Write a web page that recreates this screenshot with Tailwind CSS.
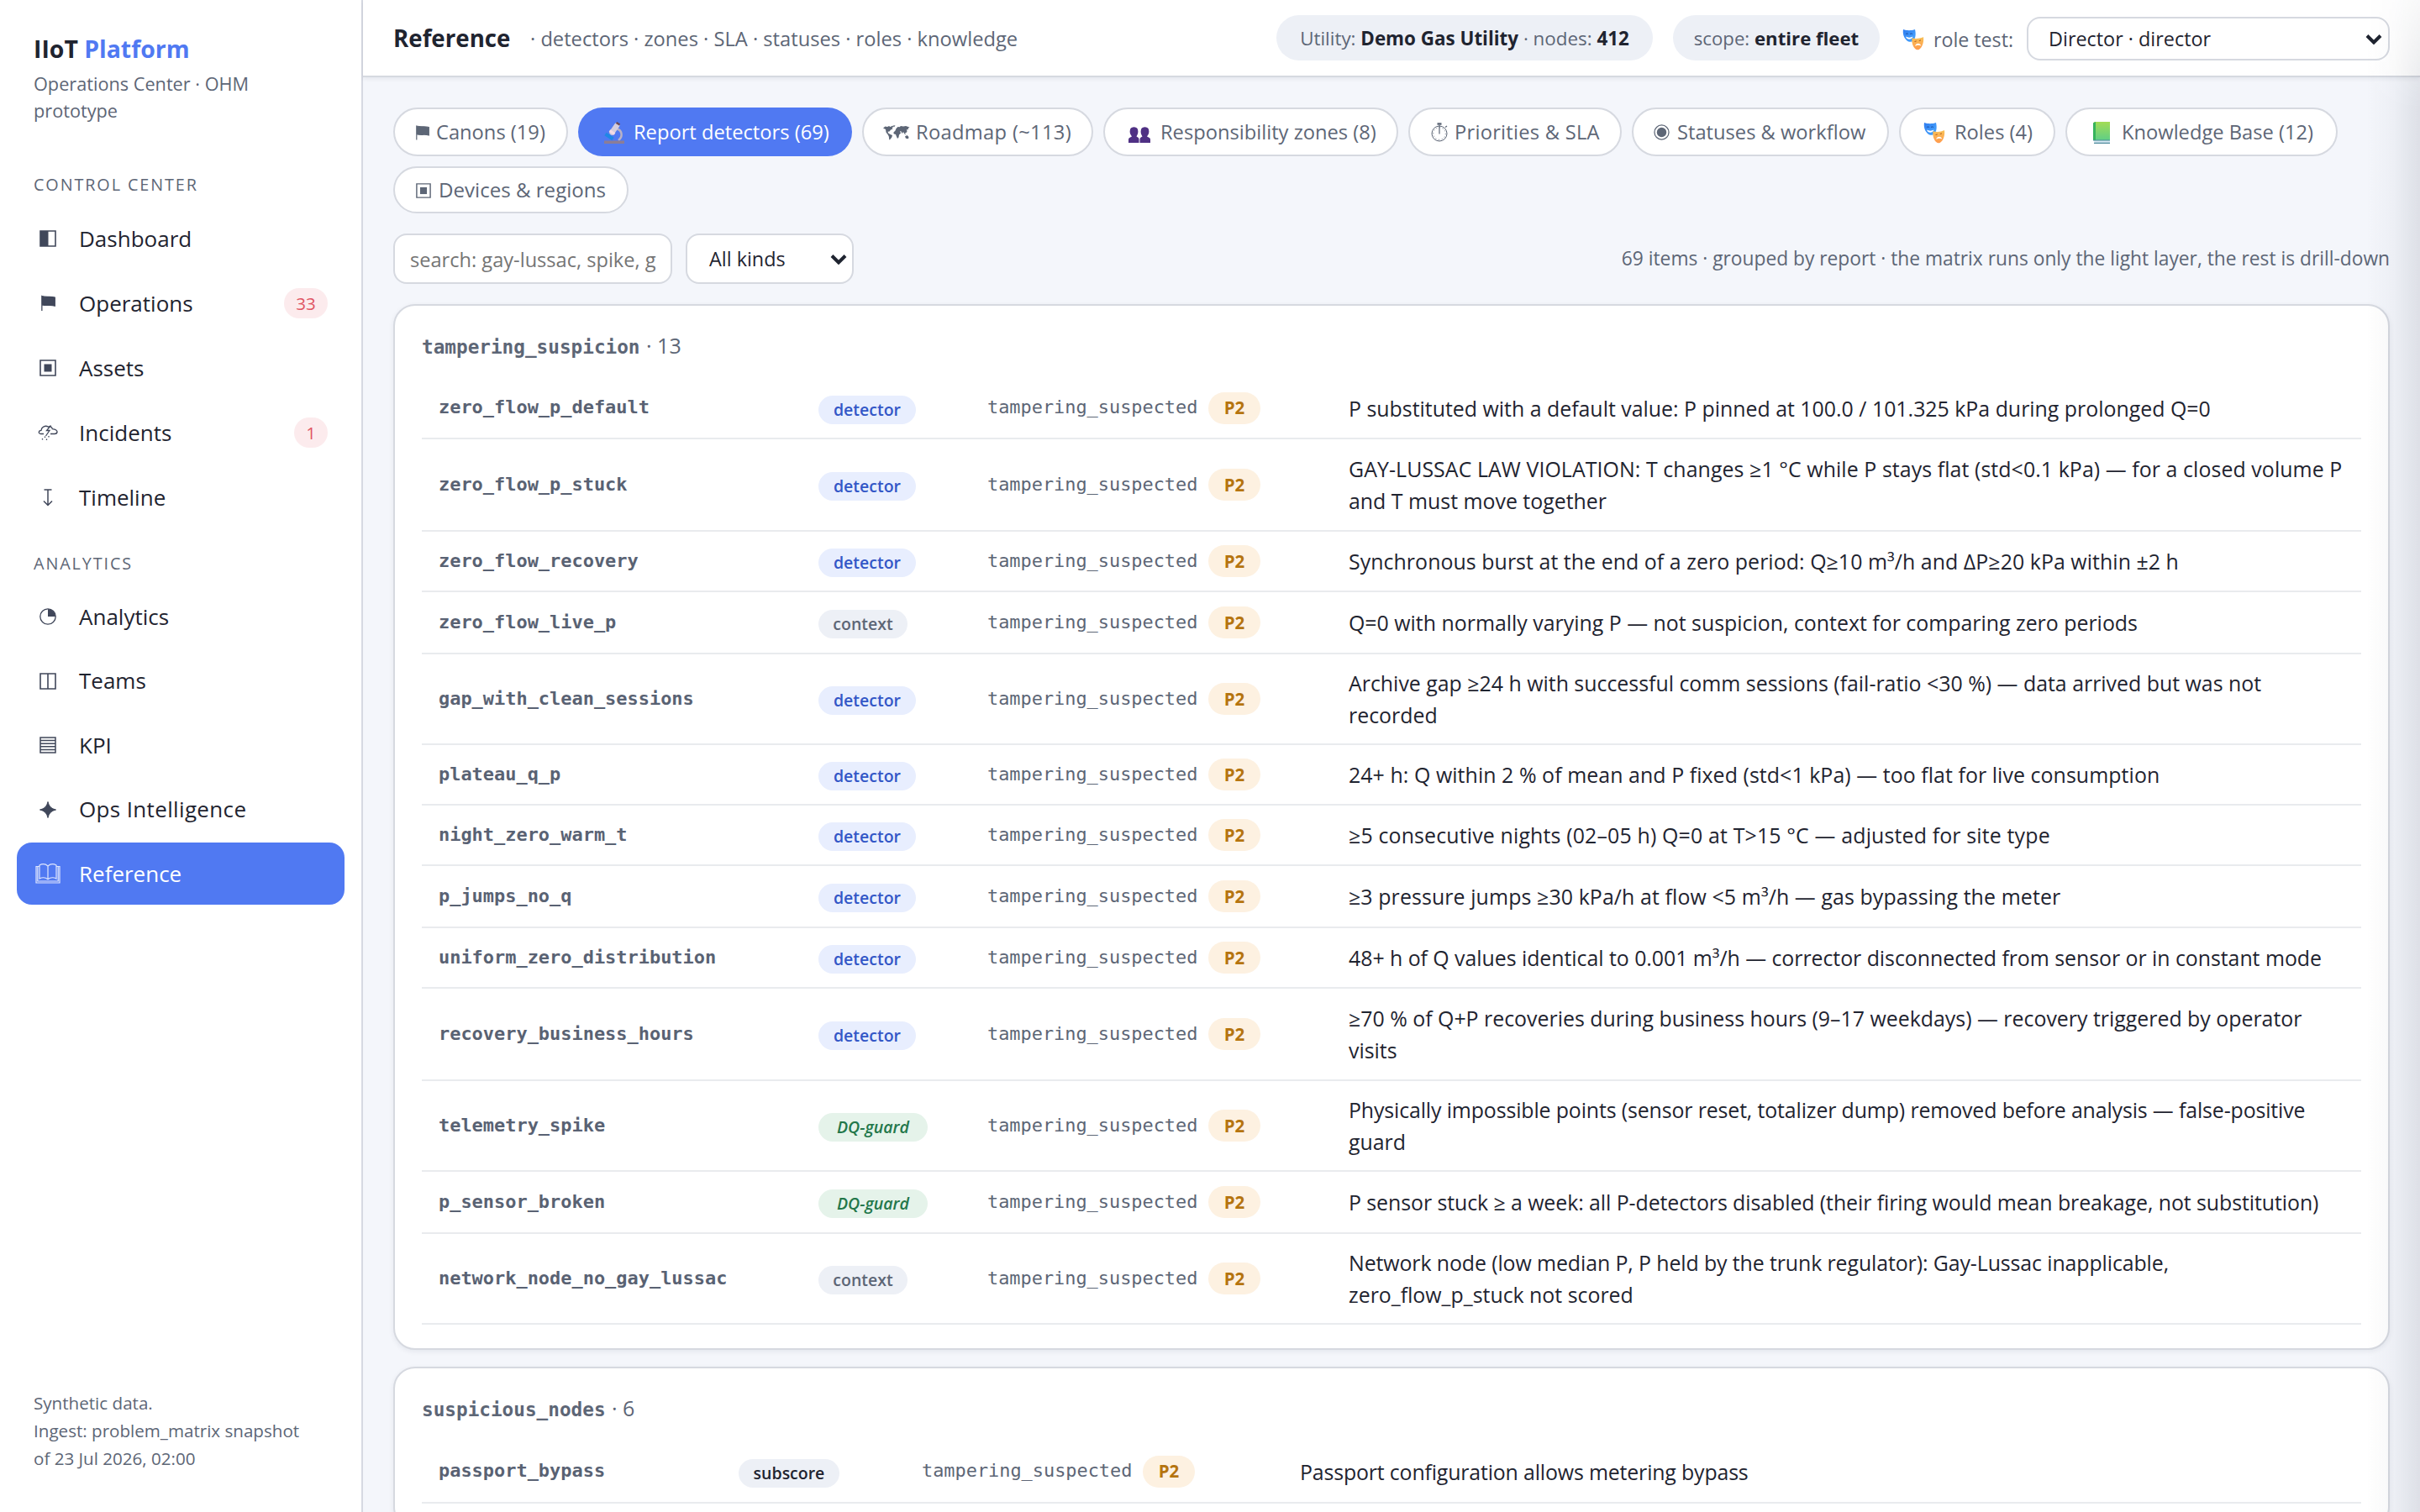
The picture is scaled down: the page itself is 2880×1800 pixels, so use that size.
<!DOCTYPE html>
<html lang="en">
  <head>
    <meta charset="UTF-8" />
    <meta name="viewport" content="width=device-width, initial-scale=1.0" />
    <title>Reference · IIoT Platform</title>
    <script src="https://cdn.jsdelivr.net/npm/@tailwindcss/browser@4"></script>
  </head>
  <body class="bg-[#f4f6fb] text-[#1f2430] font-['Open_Sans','Noto_Sans',sans-serif] w-[2880px] h-[1800px] overflow-hidden relative">

    <!-- Shared icons -->
    <svg class="absolute w-0 h-0">
      <defs>
        <linearGradient id="gBlue" x1="0" y1="0" x2="1" y2="1"><stop offset="0" stop-color="#2f7df0" /><stop offset="1" stop-color="#4aa8ff" /></linearGradient>
        <linearGradient id="gOrange" x1="0" y1="0" x2="0" y2="1"><stop offset="0" stop-color="#f8c257" /><stop offset="1" stop-color="#ff9a4d" /></linearGradient>
        <linearGradient id="gGreen" x1="0" y1="0" x2="0" y2="1"><stop offset="0" stop-color="#a3dc55" /><stop offset="1" stop-color="#5fcf86" /></linearGradient>
      </defs>
      <symbol id="masks" viewBox="0 0 26 26">
        <path d="M1 1c4 1.600 10 1.600 14 0 1.200 5 1 10.500-2 13.500-2 1.800-5.500 1.800-7.500 0C1.500 11 .2 6 1 1z" fill="url(#gBlue)" />
        <path d="M4 6.500q1.500-1.200 3 0M9 6.500q1.500-1.200 3 0" stroke="#174a9c" stroke-width=".9" fill="none" />
        <path d="M4 9.500c2.500 1.500 6 1.500 8.500 0-.6 4-7.500 4.500-8.500 0z" fill="#fff" />
        <path d="M11.500 11.200c4 1.200 9.500.8 13.500-1.200.8 6-1 12-5 14.800-1.600.9-3.500.6-4.800-.7-3-3-4.400-8-3.700-12.900z" fill="url(#gOrange)" />
        <path d="M14.500 15.500l2.200-.6M19.800 14.600l2.200-.8" stroke="#a5541a" stroke-width=".9" />
        <path d="M15.200 21c.6-4 6-4.500 7-.6-2-1.200-5-1-7 .6z" fill="#fff" />
      </symbol>
      <symbol id="flag" viewBox="0 0 16 18">
        <path d="M.8.5v17M.8 1c5 1.700 9.500-.2 14.500 1.500V12C10.500 10.300 6 12.200.8 10.700z" fill="currentColor" stroke="currentColor" stroke-width="1.200" />
      </symbol>
      <symbol id="square" viewBox="0 0 20 20">
        <path d="M1 1h18v18H1z" fill="none" stroke="currentColor" stroke-width="1.600" />
        <path d="M5.500 5.500h9v9h-9z" fill="currentColor" />
      </symbol>
      <symbol id="chevron" viewBox="0 0 20 13">
        <path d="M2 2.500l8 8 8-8" fill="none" stroke="#1f2430" stroke-width="4" />
      </symbol>
    </svg>

    <div class="flex w-full h-full">
      <!-- Sidebar -->
      <aside class="w-[432px] shrink-0 h-full bg-white border-r-2 border-[#d6d9e2] flex flex-col pt-[38px] pb-[47px]">
        <div class="px-[40px]">
          <div class="text-[28.400px] leading-[40px] font-bold">IIoT <span class="text-[#5079f2]">Platform</span></div>
          <div class="mt-[6px] text-[21.700px] leading-[32px] text-[#5d6676]">Operations Center · OHM<br />prototype</div>
        </div>

        <div class="mt-[58px] px-[40px] text-[19.800px] leading-[28px] tracking-[1.900px] text-[#5d6676]">CONTROL CENTER</div>
        <nav class="mt-[13px] px-[20px] flex flex-col gap-[3px] text-[26px]">
          <a class="h-[74px] flex items-center pr-[20px]">
            <span class="w-[74px] flex justify-center text-[#40475a]"><svg class="w-[20px] h-[20px]" viewBox="0 0 20 20"><path d="M1 1h18v18H1z" fill="none" stroke="currentColor" stroke-width="1.600" /><path d="M1 1h9.500v18H1z" fill="currentColor" /></svg></span>Dashboard
          </a>
          <a class="h-[74px] flex items-center pr-[20px]">
            <span class="w-[74px] flex justify-center text-[#40475a]"><svg class="w-[17px] h-[20px]"><use href="#flag" /></svg></span>Operations
            <span class="ml-auto w-[52px] h-[36px] rounded-full bg-[#fcebed] text-[#e05563] text-[20.500px] flex items-center justify-center">33</span>
          </a>
          <a class="h-[74px] flex items-center pr-[20px]">
            <span class="w-[74px] flex justify-center text-[#40475a]"><svg class="w-[20px] h-[20px]"><use href="#square" /></svg></span>Assets
          </a>
          <a class="h-[74px] flex items-center pr-[20px]">
            <span class="w-[74px] flex justify-center text-[#40475a]">
              <svg class="w-[24px] h-[20px]" viewBox="0 0 24 20" fill="none" stroke="currentColor" stroke-width="1.300">
                <path d="M7 11.500H3.500C.5 11.500.5 7.500 4 7.300 4.500 3 9 1 12.500 3.200c2-1.200 4.500.2 4.800 2.500 4 .3 6 1.800 5.700 3.800-.3 1.500-1.500 2-3 2H15" />
                <path d="M15.500 1.500L10.500 7.500h3.500L9.500 14" />
                <path d="M8.500 14.500v1.500M13 14v1.500M5.500 17v1.500M10.500 17.500V19" />
              </svg>
            </span>Incidents
            <span class="ml-auto w-[40px] h-[36px] rounded-full bg-[#fcebed] text-[#e05563] text-[20.500px] flex items-center justify-center">1</span>
          </a>
          <a class="h-[74px] flex items-center pr-[20px]">
            <span class="w-[74px] flex justify-center text-[#40475a]"><svg class="w-[12px] h-[21px]" viewBox="0 0 12 21" fill="none" stroke="currentColor" stroke-width="1.500"><path d="M1.500 1h9M6 1v18M1 14.500l5 5 5-5" /></svg></span>Timeline
          </a>
        </nav>

        <div class="mt-[28px] px-[40px] text-[19.800px] leading-[28px] tracking-[1.900px] text-[#5d6676]">ANALYTICS</div>
        <nav class="mt-[12px] px-[20px] flex flex-col gap-[2.600px] text-[26px]">
          <a class="h-[74px] flex items-center">
            <span class="w-[74px] flex justify-center text-[#40475a]"><svg class="w-[20px] h-[20px]" viewBox="0 0 20 20"><circle cx="10" cy="10" r="9.200" fill="none" stroke="currentColor" stroke-width="1.300" /><path d="M10 10V1a9 9 0 0 1 9 9z" fill="currentColor" /></svg></span>Analytics
          </a>
          <a class="h-[74px] flex items-center">
            <span class="w-[74px] flex justify-center text-[#40475a]"><svg class="w-[20px] h-[20px]" viewBox="0 0 20 20"><path d="M1 1h18v18H1zM10 1v18" fill="none" stroke="currentColor" stroke-width="1.600" /></svg></span>Teams
          </a>
          <a class="h-[74px] flex items-center">
            <span class="w-[74px] flex justify-center text-[#40475a]"><svg class="w-[20px] h-[20px]" viewBox="0 0 20 20"><path d="M1 1h18v18H1zM1 4.600h18M1 8.200h18M1 11.800h18M1 15.400h18" fill="none" stroke="currentColor" stroke-width="1.500" /></svg></span>KPI
          </a>
          <a class="h-[74px] flex items-center">
            <span class="w-[74px] flex justify-center text-[#40475a]"><svg class="w-[20px] h-[20px]" viewBox="0 0 20 20"><path d="M10 .5Q11.500 8.500 19.500 10 11.500 11.500 10 19.500 8.500 11.500.5 10 8.500 8.500 10 .5z" fill="currentColor" stroke="currentColor" /></svg></span><span class="tracking-[0.350px]">Ops Intelligence</span>
          </a>
          <a class="h-[74px] flex items-center rounded-[18px] bg-[#5079f2] text-white">
            <span class="w-[74px] flex justify-center text-[#dfe6fd]">
              <svg class="w-[30px] h-[24px]" viewBox="0 0 30 24" fill="none" stroke="currentColor" stroke-width="1.200">
                <path d="M15 3C12 .3 8 .3 5 2v16c3-1.600 7-1.600 10 .8 3-2.400 7-2.400 10-.8V2C22 .3 18 .3 15 3zM15 3v16" />
                <path d="M5 3.500H2.800V21H15M25 3.500h2.200V21H15" />
                <path d="M2.800 3.500H1V23h28V3.500h-1.800" />
              </svg>
            </span>Reference
          </a>
        </nav>

        <div class="mt-auto px-[40px] text-[20.600px] leading-[33px] text-[#5d6676]">Synthetic data.<br />Ingest: problem_matrix snapshot<br />of 23 Jul 2026, 02:00</div>
      </aside>

      <div class="flex-1 min-w-0 flex flex-col">
        <!-- Header -->
        <header class="h-[92px] shrink-0 bg-white border-b-2 border-[#d6d9e0] shadow-[0_2px_5px_rgba(20,30,50,0.07)] flex items-center px-[36px] whitespace-nowrap">
          <h1 class="text-[27.700px] font-bold w-[163px] pt-[2px]">Reference</h1>
          <span class="text-[23.700px] text-[#5d6676] pt-[4px]">· detectors · zones · SLA · statuses · roles · knowledge</span>
          <div class="ml-auto flex items-center">
            <div class="w-[448px] h-[54px] rounded-full bg-[#edf0f6] text-[#5d6676] text-[22.400px] flex items-center justify-center pt-[2px]"><span>Utility: <b class="text-[#1f2430]">Demo Gas Utility</b> · nodes: <b class="text-[#1f2430]">412</b></span></div>
            <div class="ml-[24px] w-[246px] h-[54px] rounded-full bg-[#edf0f6] text-[#5d6676] text-[22.200px] flex items-center justify-center pt-[2px]"><span>scope: <b class="text-[#1f2430]">entire fleet</b></span></div>
            <svg class="ml-[27px] mt-[4px] w-[26px] h-[26px]"><use href="#masks" /></svg>
            <span class="ml-[11px] w-[111px] text-[23.200px] text-[#5d6676] pt-[4px]">role test:</span>
            <div class="w-[432px] h-[52px] mt-[2px] rounded-[16px] border-2 border-[#d6d9e0] bg-white pl-[24px] pr-[7px] flex items-center justify-between text-[23.400px]">
              <span class="pt-[2px]">Director · director</span>
              <svg class="w-[20px] h-[13px]"><use href="#chevron" /></svg>
            </div>
          </div>
        </header>

        <main class="pt-[36px] px-[36px]">
          <!-- Section tabs -->
          <div class="flex flex-wrap items-start gap-x-[12px] gap-y-[12px] text-[23.700px] text-[#5d6676] whitespace-nowrap">
            <div class="w-[208px] h-[58px] rounded-full border-2 border-[#d6d9e0] bg-white flex items-center pl-[25px] pt-px">
              <svg class="w-[16px] h-[18px] mr-[8px]"><use href="#flag" /></svg>Canons (19)
            </div>
            <div class="w-[326px] h-[58px] rounded-full bg-[#5079f2] text-white flex items-center pl-[30px] pt-px">
              <svg class="w-[26px] h-[26px] mr-[10px]" viewBox="0 0 26 26">
                <path d="M16.500 8.500c6 2 7 9 1.500 13.500" fill="none" stroke="#b9b2c6" stroke-width="2.500" />
                <path d="M1 22.500h24V26H1z" fill="#8b7d97" />
                <path d="M2.500 14.500l9 6" stroke="#1e88e5" stroke-width="4" />
                <path d="M10.500 12.500L16 4.500" stroke="#d5cede" stroke-width="6.500" stroke-linecap="round" />
                <path d="M7.500 10.500l6 4" stroke="#f4dbe5" stroke-width="3" />
                <path d="M15.500 1l4 2.500" stroke="#6d4a55" stroke-width="2.500" />
              </svg>Report detectors (69)
            </div>
            <div class="w-[275px] h-[58px] rounded-full border-2 border-[#d6d9e0] bg-white flex items-center pl-[23px] pt-px">
              <svg class="w-[32px] h-[18px] mr-[7px]" viewBox="0 0 32 18" fill="currentColor">
                <path d="M0 3.500l2.500-2L5 2l2-1 1.500 1L11 .8l1.500 1-2 1.400 1 1.300-2.500 1-1.500 2-2 .3.700 1.700L8.500 11l2.500 1-.7 2.500-2 2.500-1 .5-.5-4L5.500 11 3.500 8.500 3 5z" />
                <path d="M11.500.5l3-.3-1.500 2.300z" />
                <path d="M14.500 6.500l1-2.500 2-2 2 .3L21 1l3 .5L27 1l4.500 1.500-1.500 1-.5 2-1.500-.5.500 2.500-1.500 2-1-.3.800 2.800-2-2.500-.8-1.500-1.500 2-1-2.500-1.500-.5 1 2.500-2 2-.5 3-1.500 1.500-1.500-3.500-.5-1.500-2-.5-.8-1.500 1.300-1.500z" />
                <path d="M26 13.500l2.500-1.500 2 2-.5 2.300-3-.5z" />
              </svg><span class="tracking-[0.330px]">Roadmap (~113)</span>
            </div>
            <div class="w-[351px] h-[58px] rounded-full border-2 border-[#d6d9e0] bg-white flex items-center pl-[28px] pt-px">
              <svg class="w-[26px] h-[20px] mr-[12px] mt-[4px]" viewBox="0 0 26 20" fill="#4f3084">
                <path d="M0 20v-4c0-2 2-2.500 4-3.500C2 10 1 7.500 2 4 3 .2 10 .2 11 4c1 3.500 0 6-1.500 8.500 2 1 3 1.500 3 3.500v4z" />
                <path d="M13.500 20v-4c0-2 1-2.500 3-3.500C15 10 14 7.500 15 4c1-3.800 8-3.800 9 0 1 3.500 0 6-2 8.500 2 1 4 1.500 4 3.500v4z" />
              </svg>Responsibility zones (8)
            </div>
            <div class="w-[254px] h-[58px] rounded-full border-2 border-[#d6d9e0] bg-white flex items-center pl-[25px] pt-px">
              <svg class="w-[20px] h-[23px] mr-[8px]" viewBox="0 0 20 23" fill="none" stroke="currentColor">
                <circle cx="10" cy="13" r="9" stroke-width="1" />
                <circle cx="10" cy="13" r="7.300" stroke-width="1" stroke-dasharray="1 2.800" />
                <path d="M10 3v10.500M17 5.500l2-1.500" stroke-width="1.200" />
                <path d="M7.500 1.500h5" stroke-width="2.500" />
              </svg><span class="tracking-[0.250px]">Priorities &amp; SLA</span>
            </div>
            <div class="w-[306px] h-[58px] rounded-full border-2 border-[#d6d9e0] bg-white flex items-center pl-[24px] pt-px">
              <svg class="w-[19px] h-[19px] mr-[9px]" viewBox="0 0 20 20"><circle cx="10" cy="10" r="9" fill="none" stroke="currentColor" stroke-width="1.300" /><circle cx="10" cy="10" r="6" fill="currentColor" /></svg>Statuses &amp; workflow
            </div>
            <div class="w-[186px] h-[58px] rounded-full border-2 border-[#d6d9e0] bg-white flex items-center pl-[27px] pt-px">
              <svg class="w-[26px] h-[26px] mr-[11px]"><use href="#masks" /></svg>Roles (4)
            </div>
            <div class="w-[324px] h-[58px] rounded-full border-2 border-[#d6d9e0] bg-white flex items-center pl-[31px] pt-px">
              <svg class="w-[20px] h-[26px] mr-[14px]" viewBox="0 0 20 26">
                <path d="M1.500 0H20v22H0V1.500z" fill="url(#gGreen)" />
                <path d="M0 1.500L3 0v22H0z" fill="#37b35c" />
                <path d="M1 22h19v3.500H1.500z" fill="#d4e6f0" />
                <path d="M0 22h20M1 25.300h19" stroke="#4d8a9c" stroke-width="1.200" />
              </svg>Knowledge Base (12)
            </div>
            <div class="w-[280px] h-[56px] rounded-full border-2 border-[#d6d9e0] bg-white flex items-center pl-[25px] pt-px">
              <svg class="w-[18px] h-[18px] mr-[9px]"><use href="#square" /></svg><span class="text-[24.100px]">Devices &amp; regions</span>
            </div>
          </div>

          <!-- Filters -->
          <div class="mt-[24px] h-[60px] flex items-center">
            <input type="text" placeholder="search: gay-lussac, spike, g" class="w-[332px] h-[60px] rounded-[16px] border-2 border-[#d6d9e0] bg-white pl-[18px] pr-[14px] pt-px text-[23.600px] placeholder-[#757575]" />
            <div class="ml-[16px] w-[200px] h-[60px] rounded-[16px] border-2 border-[#d6d9e0] bg-white pl-[26px] pr-[6px] flex items-center justify-between text-[23.400px]">
              <span class="pt-px">All kinds</span>
              <svg class="w-[20px] h-[13px]"><use href="#chevron" /></svg>
            </div>
            <span class="ml-auto text-[22.780px] text-[#5d6676] whitespace-nowrap">69 items · grouped by report · the matrix runs only the light layer, the rest is drill-down</span>
          </div>

          <!-- Detector groups -->
          <div id="groups" class="mt-[24px] flex flex-col gap-[20px]"></div>
        </main>
      </div>
    </div>

    <div class="absolute top-0 right-0 w-[64px] h-full bg-linear-to-l from-[#141e32]/10 via-[#141e32]/3 to-transparent [mask-image:linear-gradient(to_bottom,rgba(0,0,0,0.3),black_130px)]"></div>

    <script>
      const KINDS = {
        detector: { label: "detector", cls: "w-[116px] bg-[#e8eefe] text-[#3357c7]" },
        context: { label: "context", cls: "w-[106px] bg-[#edf0f6] text-[#5d6676]" },
        guard: { label: "DQ-guard", cls: "w-[130px] bg-[#e5f3ea] text-[#23774a] italic" },
        subscore: { label: "subscore", cls: "w-[120px] bg-[#edf0f6] text-[#1f2430]" },
      };

      const groups = [
        {
          report: "tampering_suspicion",
          count: 13,
          cols: "grid-cols-[452px_201px_430px_1fr]",
          rows: [
            ["zero_flow_p_default", "detector", "h-[73px]", "P substituted with a default value: P pinned at 100.0 / 101.325 kPa during prolonged Q=0"],
            ["zero_flow_p_stuck", "detector", "h-[110px]", "<span class='tracking-[0.080px]'>GAY-LUSSAC LAW VIOLATION: T changes ≥1 °C while P stays flat (std&lt;0.1 kPa) — for a closed volume P</span><br>and T must move together"],
            ["zero_flow_recovery", "detector", "h-[72px]", "<span class='tracking-[0.060px]'>Synchronous burst at the end of a zero period: Q≥10 m³/h and ΔP≥20 kPa within ±2 h</span>"],
            ["zero_flow_live_p", "context", "h-[74px]", "Q=0 with normally varying P — not suspicion, context for comparing zero periods"],
            ["gap_with_clean_sessions", "detector", "h-[108px]", "Archive gap ≥24 h with successful comm sessions (fail-ratio &lt;30 %) — data arrived but was not<br>recorded"],
            ["plateau_q_p", "detector", "h-[72px]", "<span class='tracking-[0.070px]'>24+ h: Q within 2 % of mean and P fixed (std&lt;1 kPa) — too flat for live consumption</span>"],
            ["night_zero_warm_t", "detector", "h-[72px]", "<span class='tracking-[0.160px]'>≥5 consecutive nights (02–05 h) Q=0 at T&gt;15 °C — adjusted for site type</span>"],
            ["p_jumps_no_q", "detector", "h-[74px]", "<span class='tracking-[0.110px]'>≥3 pressure jumps ≥30 kPa/h at flow &lt;5 m³/h — gas bypassing the meter</span>"],
            ["uniform_zero_distribution", "detector", "h-[72px]", "<span class='tracking-[-0.040px]'>48+ h of Q values identical to 0.001 m³/h — corrector disconnected from sensor or in constant mode</span>"],
            ["recovery_business_hours", "detector", "h-[110px]", "≥70 % of Q+P recoveries during business hours (9–17 weekdays) — recovery triggered by operator<br>visits"],
            ["telemetry_spike", "guard", "h-[108px]", "<span class='tracking-[-0.130px]'>Physically impossible points (sensor reset, totalizer dump) removed before analysis — false-positive</span><br>guard"],
            ["p_sensor_broken", "guard", "h-[74px]", "<span class='tracking-[-0.070px]'>P sensor stuck ≥ a week: all P-detectors disabled (their firing would mean breakage, not substitution)</span>"],
            ["network_node_no_gay_lussac", "context", "h-[108px]", "<span class='tracking-[-0.100px]'>Network node (low median P, P held by the trunk regulator): Gay-Lussac inapplicable,</span><br>zero_flow_p_stuck not scored"],
          ],
        },
        {
          report: "suspicious_nodes",
          count: 6,
          cols: "grid-cols-[357px_218px_450px_1fr]",
          rows: [
            ["passport_bypass", "subscore", "h-[75px]", "<span class='tracking-[-0.160px]'>Passport configuration allows metering bypass</span>"],
          ],
        },
      ];

      function renderRow([name, kind, height, text], cols) {
        const k = KINDS[kind];
        return `
          <div class="grid ${cols} ${height} items-center pl-[20px] border-b-2 border-[#e9ebee] whitespace-nowrap">
            <span class="font-['DejaVu_Sans_Mono',monospace] font-bold text-[21.950px] text-[#596273]">${name}</span>
            <span class="${k.cls} h-[34px] mt-[4px] rounded-full flex items-center justify-center text-[19.500px] font-semibold">${k.label}</span>
            <span class="flex items-center">
              <span class="font-['DejaVu_Sans_Mono',monospace] w-[251px] text-[21.900px] text-[#5d6676]">tampering_suspected</span>
              <span class="ml-[12px] w-[62px] h-[38px] rounded-full bg-[#fdf1e1] text-[#b5740f] text-[20.500px] font-bold flex items-center justify-center">P2</span>
            </span>
            <span class="text-[24.900px] leading-[38px]">${text}</span>
          </div>`;
      }

      document.getElementById("groups").innerHTML = groups.map(g => `
        <section class="rounded-[26px] border-2 border-[#d6d9e0] bg-white shadow-[0_2px_6px_rgba(20,30,50,0.07)] pt-[27px] pb-[28px] px-[32px]">
          <h2 class="leading-[40px] text-[25px] text-[#5d6676]"><span class="font-['DejaVu_Sans_Mono',monospace] font-bold text-[22.700px]">${g.report}</span><span class="ml-[1px]"> · ${g.count}</span></h2>
          <div class="mt-[17px]">${g.rows.map(r => renderRow(r, g.cols)).join("")}</div>
        </section>`).join("");
    </script>
  </body>
</html>
